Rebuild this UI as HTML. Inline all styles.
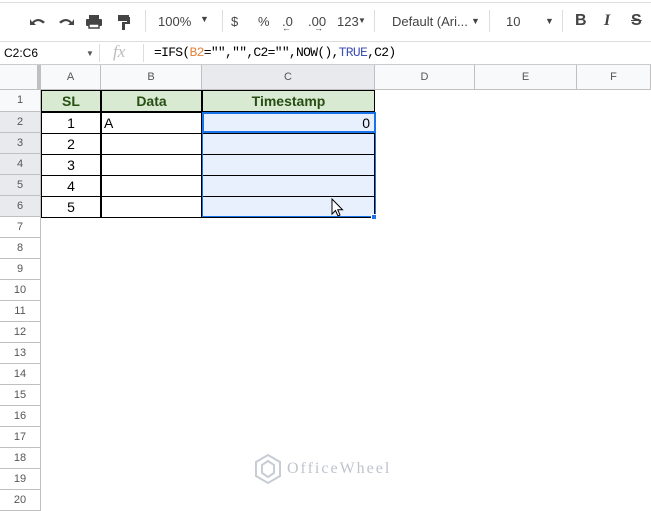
<!DOCTYPE html>
<html><head><style>
*{margin:0;padding:0;box-sizing:border-box}
body{width:651px;height:509px;overflow:hidden;background:#fff;font-family:"Liberation Sans",Arial,sans-serif;position:relative}
.a{position:absolute}
.tb{color:#444;font-size:13px}
.ch{position:absolute;top:65px;height:25px;background:#f8f9fa;border-right:1px solid #c0c0c0;border-bottom:1px solid #c0c0c0;font-size:11px;color:#555;text-align:center;line-height:24px}
.rh{position:absolute;left:0;width:41px;height:21px;border-bottom:1px solid #c0c0c0;border-right:1px solid #c0c0c0;font-size:11px;color:#555;text-align:center;line-height:21px;background:#fff}
.c{position:absolute;height:22px;border:1px solid #000;margin:-1px 0 0 -1px;font-size:14px;line-height:20px;text-align:center}
</style></head><body>
<div class="a" style="left:0;top:2px;width:651px;height:1px;background:#ddd"></div>
<div class="a" style="left:0;top:41px;width:651px;height:1px;background:#ddd"></div>
<svg class="a" style="left:28px;top:12px" width="110" height="20" viewBox="0 0 110 20" fill="#444">
<path d="M4 10 Q10 4 17 10 L15 11.5 Q10 7 6 11 L8 13 H2 V7 Z"/>
<path d="M44 10 Q38 4 31 10 L33 11.5 Q38 7 42 11 L40 13 H46 V7 Z"/>
<rect x="61" y="3" width="10" height="4"/><rect x="58" y="7" width="16" height="7" rx="1"/><rect x="61" y="12" width="10" height="4" fill="#fff" stroke="#444" stroke-width="1.5"/>
<rect x="90" y="3" width="11" height="6"/><rect x="99" y="5" width="3" height="7"/><rect x="94" y="10" width="6" height="2"/><rect x="94" y="10" width="3" height="8"/>
</svg>
<div class="a" style="left:145px;top:10px;width:1px;height:22px;background:#ddd"></div>
<div class="a tb" style="left:158px;top:14px">100%</div>
<div class="a tb" style="left:200px;top:14px;font-size:9px">▼</div>
<div class="a" style="left:222px;top:10px;width:1px;height:22px;background:#ddd"></div>
<div class="a tb" style="left:231px;top:14px">$</div>
<div class="a tb" style="left:258px;top:14px">%</div>
<div class="a tb" style="left:282px;top:14px">.0</div>
<div class="a tb" style="left:282px;top:23px;font-size:9px">←</div>
<div class="a tb" style="left:308px;top:14px">.00</div>
<div class="a tb" style="left:314px;top:23px;font-size:9px">→</div>
<div class="a tb" style="left:337px;top:14px">123</div>
<div class="a tb" style="left:358px;top:16px;font-size:8px">▼</div>
<div class="a" style="left:374px;top:10px;width:1px;height:22px;background:#ddd"></div>
<div class="a tb" style="left:392px;top:14px">Default (Ari...</div>
<div class="a tb" style="left:471px;top:16px;font-size:9px">▼</div>
<div class="a" style="left:489px;top:10px;width:1px;height:22px;background:#ddd"></div>
<div class="a tb" style="left:506px;top:14px">10</div>
<div class="a tb" style="left:545px;top:16px;font-size:9px">▼</div>
<div class="a" style="left:562px;top:10px;width:1px;height:22px;background:#ddd"></div>
<div class="a tb" style="left:575px;top:12px;font-size:16px;font-weight:bold">B</div>
<div class="a tb" style="left:604px;top:12px;font-size:16px;font-style:italic;font-weight:bold;font-family:'Liberation Serif',serif">I</div>
<div class="a tb" style="left:631px;top:12px;font-size:16px;font-weight:bold;text-decoration:line-through">S</div>
<div class="a" style="left:4px;top:46px;font-size:12px;color:#000">C2:C6</div>
<div class="a" style="left:86px;top:49px;font-size:8px;color:#555">▼</div>
<div class="a" style="left:99px;top:44px;width:1px;height:18px;background:#ddd"></div>
<div class="a" style="left:113px;top:42px;font-size:17px;color:#bbb;font-style:italic;font-family:'Liberation Serif',serif">fx</div>
<div class="a" style="left:143px;top:44px;width:1px;height:18px;background:#ddd"></div>
<div class="a" style="left:154px;top:45px;font-size:13px;font-family:'Liberation Mono',monospace;color:#000;letter-spacing:-0.7px">=IFS(<span style="color:#e6843c">B2</span>="","",C2="",NOW(),<span style="color:#3f51b5">TRUE</span>,C2)</div>
<div class="a" style="left:0;top:64px;width:651px;height:1px;background:#ccc"></div>
<div class="ch" style="left:0;width:41px;border-right:4px solid #c0c0c0"></div>
<div class="ch" style="left:41px;width:60px">A</div>
<div class="ch" style="left:101px;width:101px">B</div>
<div class="ch" style="left:202px;width:173px;background:#e8eaed">C</div>
<div class="ch" style="left:375px;width:100px">D</div>
<div class="ch" style="left:475px;width:102px">E</div>
<div class="ch" style="left:577px;width:74px">F</div>
<div class="rh" style="top:90px;height:22px;background:#f8f9fa">1</div>
<div class="rh" style="top:112px;background:#e8eaed">2</div>
<div class="rh" style="top:133px;background:#e8eaed">3</div>
<div class="rh" style="top:154px;background:#e8eaed">4</div>
<div class="rh" style="top:175px;background:#e8eaed">5</div>
<div class="rh" style="top:196px;background:#e8eaed">6</div>
<div class="rh" style="top:217px">7</div><div class="rh" style="top:238px">8</div><div class="rh" style="top:259px">9</div><div class="rh" style="top:280px">10</div><div class="rh" style="top:301px">11</div><div class="rh" style="top:322px">12</div><div class="rh" style="top:343px">13</div><div class="rh" style="top:364px">14</div><div class="rh" style="top:385px">15</div><div class="rh" style="top:406px">16</div><div class="rh" style="top:427px">17</div><div class="rh" style="top:448px">18</div><div class="rh" style="top:469px">19</div><div class="rh" style="top:490px">20</div>
<div class="c" style="left:42px;top:91px;width:60px;background:#d9ead3;color:#274e13;font-weight:bold">SL</div>
<div class="c" style="left:102px;top:91px;width:101px;background:#d9ead3;color:#274e13;font-weight:bold">Data</div>
<div class="c" style="left:203px;top:91px;width:173px;background:#d9ead3;color:#274e13;font-weight:bold">Timestamp</div>
<div class="c" style="left:42px;top:113px;width:60px">1</div><div class="c" style="left:102px;top:113px;width:101px;text-align:left;padding-left:2px">A</div><div class="c" style="left:203px;top:113px;width:173px;background:#e8f0fe;text-align:right;padding-right:4px">0</div>
<div class="c" style="left:42px;top:134px;width:60px">2</div><div class="c" style="left:102px;top:134px;width:101px"></div><div class="c" style="left:203px;top:134px;width:173px;background:#e8f0fe"></div>
<div class="c" style="left:42px;top:155px;width:60px">3</div><div class="c" style="left:102px;top:155px;width:101px"></div><div class="c" style="left:203px;top:155px;width:173px;background:#e8f0fe"></div>
<div class="c" style="left:42px;top:176px;width:60px">4</div><div class="c" style="left:102px;top:176px;width:101px"></div><div class="c" style="left:203px;top:176px;width:173px;background:#e8f0fe"></div>
<div class="c" style="left:42px;top:197px;width:60px">5</div><div class="c" style="left:102px;top:197px;width:101px"></div><div class="c" style="left:203px;top:197px;width:173px;background:#e8f0fe"></div>
<div class="a" style="left:202px;top:112px;width:174px;height:105px;border:1px solid #1a73e8"></div>
<div class="a" style="left:202px;top:112px;width:174px;height:21px;border:2px solid #1a73e8"></div>
<div class="a" style="left:371px;top:214px;width:6px;height:6px;background:#1a73e8;border:1px solid #fff"></div>
<svg class="a" style="left:331px;top:198px" width="14" height="20" viewBox="0 0 14 20"><path d="M1 1 V16 L4.5 12.5 L7 18 L9 17 L6.8 11.8 H11.5 Z" fill="#fff" stroke="#000" stroke-width="1"/></svg>
<svg class="a" style="left:254px;top:453px" width="28" height="32" viewBox="0 0 28 32" fill="none" stroke="#c8ccd4" stroke-width="2"><path d="M14 2 L26 9 V23 L14 30 L2 23 V9 Z"/><path d="M14 8 L20 12 V20 L14 24 L8 20 V12 Z"/></svg>
<div class="a" style="left:287px;top:460px;font-size:16px;color:#bfc3cc;font-family:'Liberation Serif',serif;letter-spacing:2px">OfficeWheel</div>
</body></html>
